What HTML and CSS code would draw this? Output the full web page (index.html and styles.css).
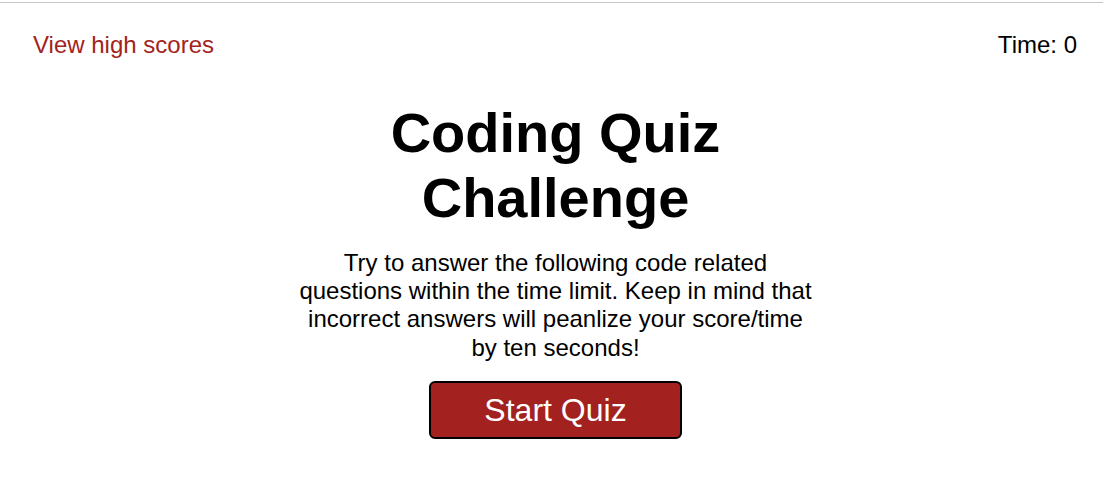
FILE: index.html
```html
<!DOCTYPE html>
<html lang="en">
<head>
<meta charset="utf-8">
<title>Coding Quiz Challenge</title>
<link rel="stylesheet" href="styles.css">
</head>
<body>
<div class="rule"></div>
<header class="topbar">
  <a class="highscores" href="#">View high scores</a>
  <div class="timer">Time: <span>0</span></div>
</header>
<main class="stage">
  <section class="intro">
    <h1 class="title">Coding Quiz Challenge</h1>
    <p class="desc">Try to answer the following code related questions within the time limit. Keep in mind that incorrect answers will peanlize your score/time by ten seconds!</p>
    <button class="start" type="button">Start Quiz</button>
  </section>
</main>
</body>
</html>
```
FILE: styles.css
```css
html, body {
  margin: 0;
  padding: 0;
  background: #fff;
}
body {
  font-family: "Liberation Sans", Arial, sans-serif;
  line-height: 1.2;
  color: #000;
  padding-top: 2px;
}
.rule {
  height: 1px;
  background: #c6c6c6;
}
.topbar {
  display: flex;
  justify-content: space-between;
  align-items: center;
  padding: 28px 26px 0 33px;
  font-size: 24px;
}
.highscores {
  color: #a32320;
  text-decoration: none;
}
.stage {
  padding-left: 8px;
}
.intro {
  width: 520px;
  margin: 40px auto 0;
  display: flex;
  flex-direction: column;
  align-items: center;
  text-align: center;
}
.title {
  margin: 0;
  font-size: 56px;
  font-weight: bold;
  line-height: normal;
}
.desc {
  margin: 19px 0 0;
  font-size: 24px;
  line-height: 1.18;
}
.start {
  margin-top: 19px;
  width: 253px;
  height: 58px;
  box-sizing: border-box;
  background: #a32220;
  color: #fff;
  border: 2px solid #000;
  border-radius: 6px;
  font-family: "Liberation Sans", Arial, sans-serif;
  font-size: 32px;
  line-height: 1.2;
  padding: 0;
}
```
